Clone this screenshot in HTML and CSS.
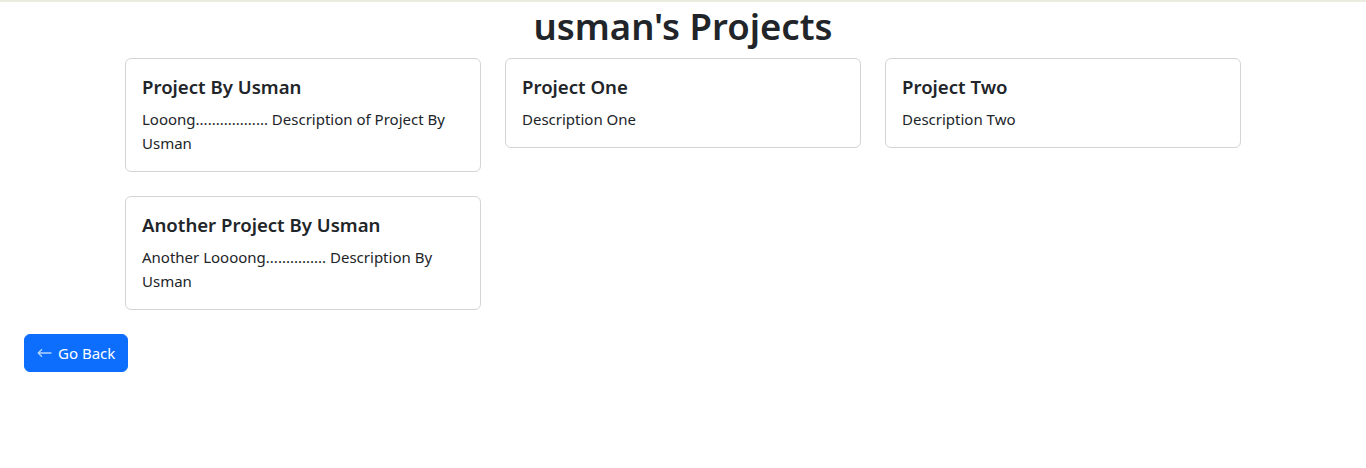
FILE: index.html
```html
<!DOCTYPE html>
<html lang="en">
<head>
<meta charset="utf-8">
<title>usman's Projects</title>
<link rel="stylesheet" href="styles.css">
</head>
<body>
<div class="topbar"></div>
<main class="page">
  <h1 class="page-title">usman's Projects</h1>
  <div class="container">
    <div class="grid">
      <div class="card">
        <h5 class="card-title">Project By Usman</h5>
        <p class="card-text">Looong.................. Description of Project By Usman</p>
      </div>
      <div class="card">
        <h5 class="card-title">Project One</h5>
        <p class="card-text">Description One</p>
      </div>
      <div class="card">
        <h5 class="card-title">Project Two</h5>
        <p class="card-text">Description Two</p>
      </div>
      <div class="card">
        <h5 class="card-title">Another Project By Usman</h5>
        <p class="card-text">Another Loooong............... Description By Usman</p>
      </div>
    </div>
  </div>
  <div class="actions">
    <button class="btn-back" type="button"><svg class="arrow" width="15" height="10" viewBox="0 0 15 10" aria-hidden="true"><path d="M14.5 5H1.2M5 1.2L1.2 5 5 8.8" fill="none" stroke="currentColor" stroke-width="1.3"/></svg>Go Back</button>
  </div>
</main>
</body>
</html>
```
FILE: styles.css
```css
* { box-sizing: border-box; }
html, body { margin: 0; padding: 0; }
body {
  font-family: "Noto Sans", "Open Sans", sans-serif;
  font-size: 16px;
  line-height: 1.5;
  color: #212529;
  background: #fff;
}
.topbar {
  height: 2px;
  background: #ebebe0;
}
.page-title {
  margin: 0 0 8px;
  text-align: center;
  font-size: 36.5px;
  font-weight: 600;
  line-height: 48px;
}
.container {
  width: 1140px;
  margin: 0 auto;
  padding: 0 12px;
}
.grid {
  display: grid;
  grid-template-columns: repeat(3, 356px);
  column-gap: 24px;
  row-gap: 24px;
  align-items: start;
}
.card {
  border: 1px solid #d3d4d5;
  border-radius: 6px;
  padding: 16px;
  background: #fff;
}
.card-title {
  margin: 0 0 8px;
  font-size: 18.6px;
  font-weight: 600;
  line-height: 24px;
}
.card-text {
  margin: 0;
  font-size: 15px;
  line-height: 24px;
}
.actions {
  padding: 24px 24px;
}
.btn-back {
  display: inline-flex;
  align-items: center;
  gap: 6px;
  height: 38px;
  padding: 0 12px;
  border: 1px solid #0d6efd;
  border-radius: 6px;
  background: #0d6efd;
  color: #fff;
  font-family: inherit;
  font-size: 15px;
  line-height: 24px;
}
.arrow { color: rgba(255,255,255,0.7); }
```
